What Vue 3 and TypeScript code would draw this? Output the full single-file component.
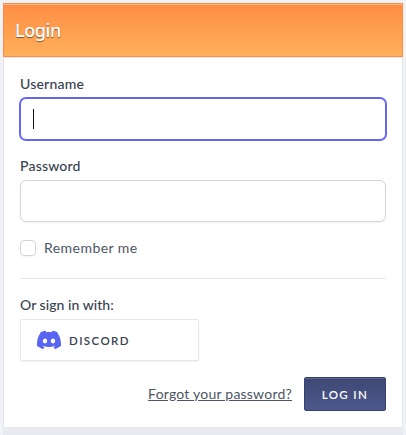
<script setup lang="ts">
import { ref } from 'vue'

const username = ref('')
const password = ref('')
const remember = ref(false)
</script>

<template>
  <main class="page">
    <section class="card">
      <header class="card-header">
        <h1>Login</h1>
      </header>
      <form class="card-body" @submit.prevent>
        <label class="label user-label" for="username">Username</label>
        <div class="input focused" id="username">
          <span class="caret"></span>{{ username }}
        </div>

        <label class="label pass-label" for="password">Password</label>
        <input id="password" v-model="password" class="input" type="password" />

        <label class="remember">
          <input v-model="remember" type="checkbox" class="checkbox" />
          <span>Remember me</span>
        </label>

        <hr class="divider" />

        <p class="label social-label">Or sign in with:</p>
        <a class="discord">
          <svg width="24" height="24" viewBox="0 0 24 24" fill="#5865f2" aria-hidden="true">
            <path d="M20.317 4.3698a19.7913 19.7913 0 00-4.8851-1.5152.0741.0741 0 00-.0785.0371c-.211.3753-.4447.8648-.6083 1.2495-1.8447-.2762-3.68-.2762-5.4868 0-.1636-.3933-.4058-.8742-.6177-1.2495a.077.077 0 00-.0785-.037 19.7363 19.7363 0 00-4.8852 1.515.0699.0699 0 00-.0321.0277C.5334 9.0458-.319 13.5799.0992 18.0578a.0824.0824 0 00.0312.0561c2.0528 1.5076 4.0413 2.4228 5.9929 3.0294a.0777.0777 0 00.0842-.0276c.4616-.6304.8731-1.2952 1.226-1.9942a.076.076 0 00-.0416-.1057c-.6528-.2476-1.2743-.5495-1.8722-.8923a.077.077 0 01-.0076-.1277c.1258-.0943.2517-.1923.3718-.2914a.0743.0743 0 01.0776-.0105c3.9278 1.7933 8.18 1.7933 12.0614 0a.0739.0739 0 01.0785.0095c.1202.099.246.1981.3728.2924a.077.077 0 01-.0066.1276 12.2986 12.2986 0 01-1.873.8914.0766.0766 0 00-.0407.1067c.3604.698.7719 1.3628 1.225 1.9932a.076.076 0 00.0842.0286c1.961-.6067 3.9495-1.5219 6.0023-3.0294a.077.077 0 00.0313-.0552c.5004-5.177-.8382-9.6739-3.5485-13.6604a.061.061 0 00-.0312-.0286zM8.02 15.3312c-1.1825 0-2.1569-1.0857-2.1569-2.419 0-1.3332.9555-2.4189 2.157-2.4189 1.2108 0 2.1757 1.0952 2.1568 2.419 0 1.3332-.9555 2.4189-2.1569 2.4189zm7.9748 0c-1.1825 0-2.1569-1.0857-2.1569-2.419 0-1.3332.9554-2.4189 2.1569-2.4189 1.2108 0 2.1757 1.0952 2.1568 2.419 0 1.3332-.946 2.4189-2.1568 2.4189z" />
          </svg>
          <span>DISCORD</span>
        </a>

        <div class="actions">
          <a class="forgot">Forgot your password?</a>
          <button type="submit" class="submit">LOG IN</button>
        </div>
      </form>
    </section>
  </main>
</template>

<style>
body {
  background: #f0f2f5;
  overflow: hidden;
}
</style>

<style scoped>
* {
  box-sizing: border-box;
}
.page {
  height: 435px;
  padding: 3px 3px 0;
  background: #f0f2f5;
  font-family: Lato, sans-serif;
  overflow: hidden;
}
.card {
  width: 400px;
  height: 425px;
  background: #fff;
  box-shadow: 0 4px 0 #e9ebf0, 0 8px 0 #e8e9f1;
}
.card-header {
  display: flex;
  align-items: center;
  height: 54px;
  padding: 0 11px;
  border: 1px solid #ff8c42;
  background: linear-gradient(#ff8d44, #ffb05a);
  box-shadow: inset 0 1px 0 rgba(255, 255, 255, 0.4);
}
h1 {
  margin: 0;
  color: #fff;
  font-size: 18px;
  line-height: 28px;
  font-weight: 500;
  font-family: "Noto Sans", sans-serif;
  letter-spacing: -0.4px;
  text-shadow: 0 1px 1px rgba(0, 0, 0, 0.5);
}
.card-body {
  display: flex;
  flex-direction: column;
  height: 371px;
  padding: 16px 16px 0;
  border: 1px solid #e5e7eb;
}
.label {
  margin: 0;
  color: #374151;
  font-size: 14px;
  line-height: 20px;
  font-weight: 500;
  letter-spacing: 0.2px;
}
.social-label {
  letter-spacing: 0.05px;
}
.input {
  display: flex;
  align-items: center;
  flex: none;
  width: 366px;
  height: 42px;
  margin: 4px 0 0;
  padding: 0 12px;
  border: 1px solid #d1d5db;
  border-radius: 6px;
  background: #fff;
  box-shadow: 0 1px 2px rgba(0, 0, 0, 0.05);
  outline: none;
}
.focused {
  border-color: #6366f1;
  box-shadow: 0 0 0 1px #6366f1;
}
.caret {
  width: 1px;
  height: 20px;
  background: #111;
}
.pass-label {
  margin-top: 16px;
}
.remember {
  display: flex;
  align-items: center;
  gap: 8px;
  height: 20px;
  margin-top: 16px;
  color: #4b5563;
  font-size: 14px;
  letter-spacing: 0.45px;
}
.remember span {
  padding-bottom: 1px;
}
.checkbox {
  appearance: none;
  width: 16px;
  height: 16px;
  margin: 0;
  border: 1px solid #d1d5db;
  border-radius: 4px;
  box-shadow: 0 1px 2px rgba(0, 0, 0, 0.05);
}
.divider {
  width: 100%;
  height: 1px;
  margin: 20px 0 16px;
  border: 0;
  background: #e5e7eb;
}
.discord {
  display: flex;
  align-items: center;
  gap: 8px;
  width: 179px;
  height: 42px;
  margin-top: 4px;
  padding: 0 16px;
  border: 1px solid #e5e7eb;
  border-radius: 2px;
  box-shadow: 0 1px 2px rgba(0, 0, 0, 0.05);
  color: #374151;
  font-size: 11.5px;
  font-weight: 600;
  letter-spacing: 1.4px;
}
.actions {
  display: flex;
  align-items: center;
  justify-content: flex-end;
  gap: 12px;
  margin-top: 16px;
}
.forgot {
  color: #4b5563;
  font-size: 14px;
  line-height: 20px;
  text-decoration: underline;
  letter-spacing: 0.22px;
}
.submit {
  width: 82px;
  height: 34px;
  padding: 0;
  border: 1px solid #374071;
  border-radius: 2px;
  background: linear-gradient(#3f4874, #4d588c);
  box-shadow: inset 0 1px 0 rgba(255, 255, 255, 0.15);
  color: #fff;
  font-family: inherit;
  font-size: 11.5px;
  font-weight: 600;
  letter-spacing: 1.4px;
}
</style>
